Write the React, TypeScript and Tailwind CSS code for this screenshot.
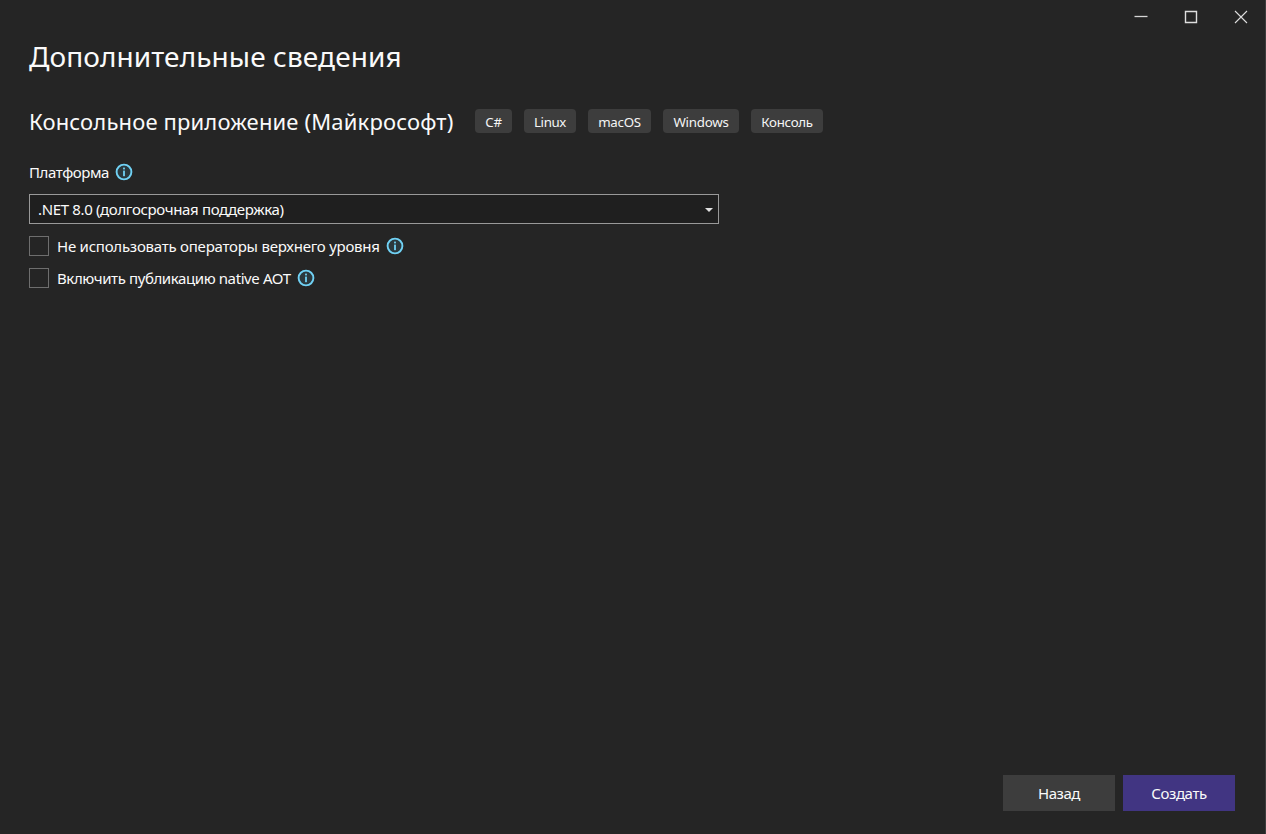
import type { ReactNode } from "react";

function InfoIcon() {
  return (
    <svg width="18" height="18" viewBox="0 0 18 18" className="shrink-0" aria-hidden="true">
      <circle cx="9" cy="9" r="7.4" fill="#2b383d" stroke="#70d1f4" strokeWidth="1.9" />
      <rect x="8.1" y="4.6" width="1.8" height="1.8" fill="#70d1f4" />
      <rect x="8.1" y="7.6" width="1.8" height="5.6" fill="#70d1f4" />
    </svg>
  );
}

function Tag({ children, className }: { children: ReactNode; className: string }) {
  return (
    <span
      className={`flex h-6 items-center justify-center whitespace-nowrap rounded-[4px] bg-[#3d3d3d] pt-[3px] text-[13.3px] text-[#f5f5f5] ${className}`}
    >
      {children}
    </span>
  );
}

function Option({ label, className }: { label: string; className: string }) {
  return (
    <div className="flex h-5 items-center">
      <button
        type="button"
        role="checkbox"
        aria-checked="false"
        aria-label={label}
        className="size-5 shrink-0 border border-[#6e6e6e] bg-[#252525]"
      />
      <span className={`ml-2 whitespace-nowrap ${className}`}>{label}</span>
      <InfoIcon />
    </div>
  );
}

export default function App() {
  return (
    <div className="flex h-[834px] w-[1266px] flex-col overflow-hidden border-r border-[#3d3d3d] bg-[#252525] font-['Noto_Sans','Open_Sans',sans-serif] text-[15px] text-[#fafafa]">
      <header className="-mr-px flex h-[34px] shrink-0 justify-end">
        <button type="button" aria-label="Свернуть" className="flex w-[50px] items-center justify-center">
          <svg width="14" height="14" viewBox="0 0 14 14">
            <path d="M.5 6.5h13" stroke="#d6d6d6" strokeWidth="1.3" />
          </svg>
        </button>
        <button type="button" aria-label="Развернуть" className="flex w-[50px] items-center justify-center">
          <svg width="14" height="14" viewBox="0 0 14 14" fill="none">
            <path d="M1.5 1.5h11v11h-11z" stroke="#dedede" strokeWidth="1.4" />
          </svg>
        </button>
        <button type="button" aria-label="Закрыть" className="flex w-[50px] items-center justify-center">
          <svg width="14" height="14" viewBox="0 0 14 14" fill="none">
            <path d="m1 1 12 12M13 1 1 13" stroke="#dedede" strokeWidth="1.1" />
          </svg>
        </button>
      </header>
      <main className="flex flex-1 flex-col px-[29px]">
        <h1 className="h-[44px] w-[373px] whitespace-nowrap text-[28px] leading-[44px] tracking-[0.09px]">
          Дополнительные сведения
        </h1>
        <div className="mt-[31px] flex h-6 items-center">
          <h2 className="w-[446px] shrink-0 whitespace-nowrap text-[22px] leading-6 tracking-[0.15px]">
            Консольное приложение (Майкрософт)
          </h2>
          <div className="flex gap-3">
            <Tag className="w-[37px] tracking-[-0.2px]">C#</Tag>
            <Tag className="w-[52px] tracking-[-0.35px]">Linux</Tag>
            <Tag className="w-[63px] tracking-[-0.25px]">macOS</Tag>
            <Tag className="w-[76px] tracking-[-0.25px]">Windows</Tag>
            <Tag className="w-[72px] tracking-[-0.3px]">Консоль</Tag>
          </div>
        </div>
        <div className="mt-[29px] flex h-5 items-center">
          <span className="w-[86px] tracking-[-0.42px]">Платформа</span>
          <InfoIcon />
        </div>
        <button
          type="button"
          className="mt-3 flex h-[30px] w-[690px] items-center justify-between border border-[#999999] bg-[#1f1f1f] pl-2 pr-[5px]"
        >
          <span className="tracking-[-0.35px]">.NET 8.0 (долгосрочная поддержка)</span>
          <svg width="8" height="4" viewBox="0 0 8 4" fill="#e0e0e0" className="mt-px">
            <path d="M0 0h8L4 4z" />
          </svg>
        </button>
        <div className="mt-3 flex flex-col gap-3">
          <Option label="Не использовать операторы верхнего уровня" className="w-[329px] tracking-[-0.24px]" />
          <Option label="Включить публикацию native AOT" className="w-[240px] tracking-[-0.4px]" />
        </div>
      </main>
      <footer className="mb-[23px] mr-[30px] flex justify-end gap-2">
        <button type="button" className="h-9 w-28 bg-[#3d3d3d] tracking-[-0.45px]">Назад</button>
        <button type="button" className="h-9 w-28 bg-[#413582] tracking-[-0.4px]">Создать</button>
      </footer>
    </div>
  );
}
